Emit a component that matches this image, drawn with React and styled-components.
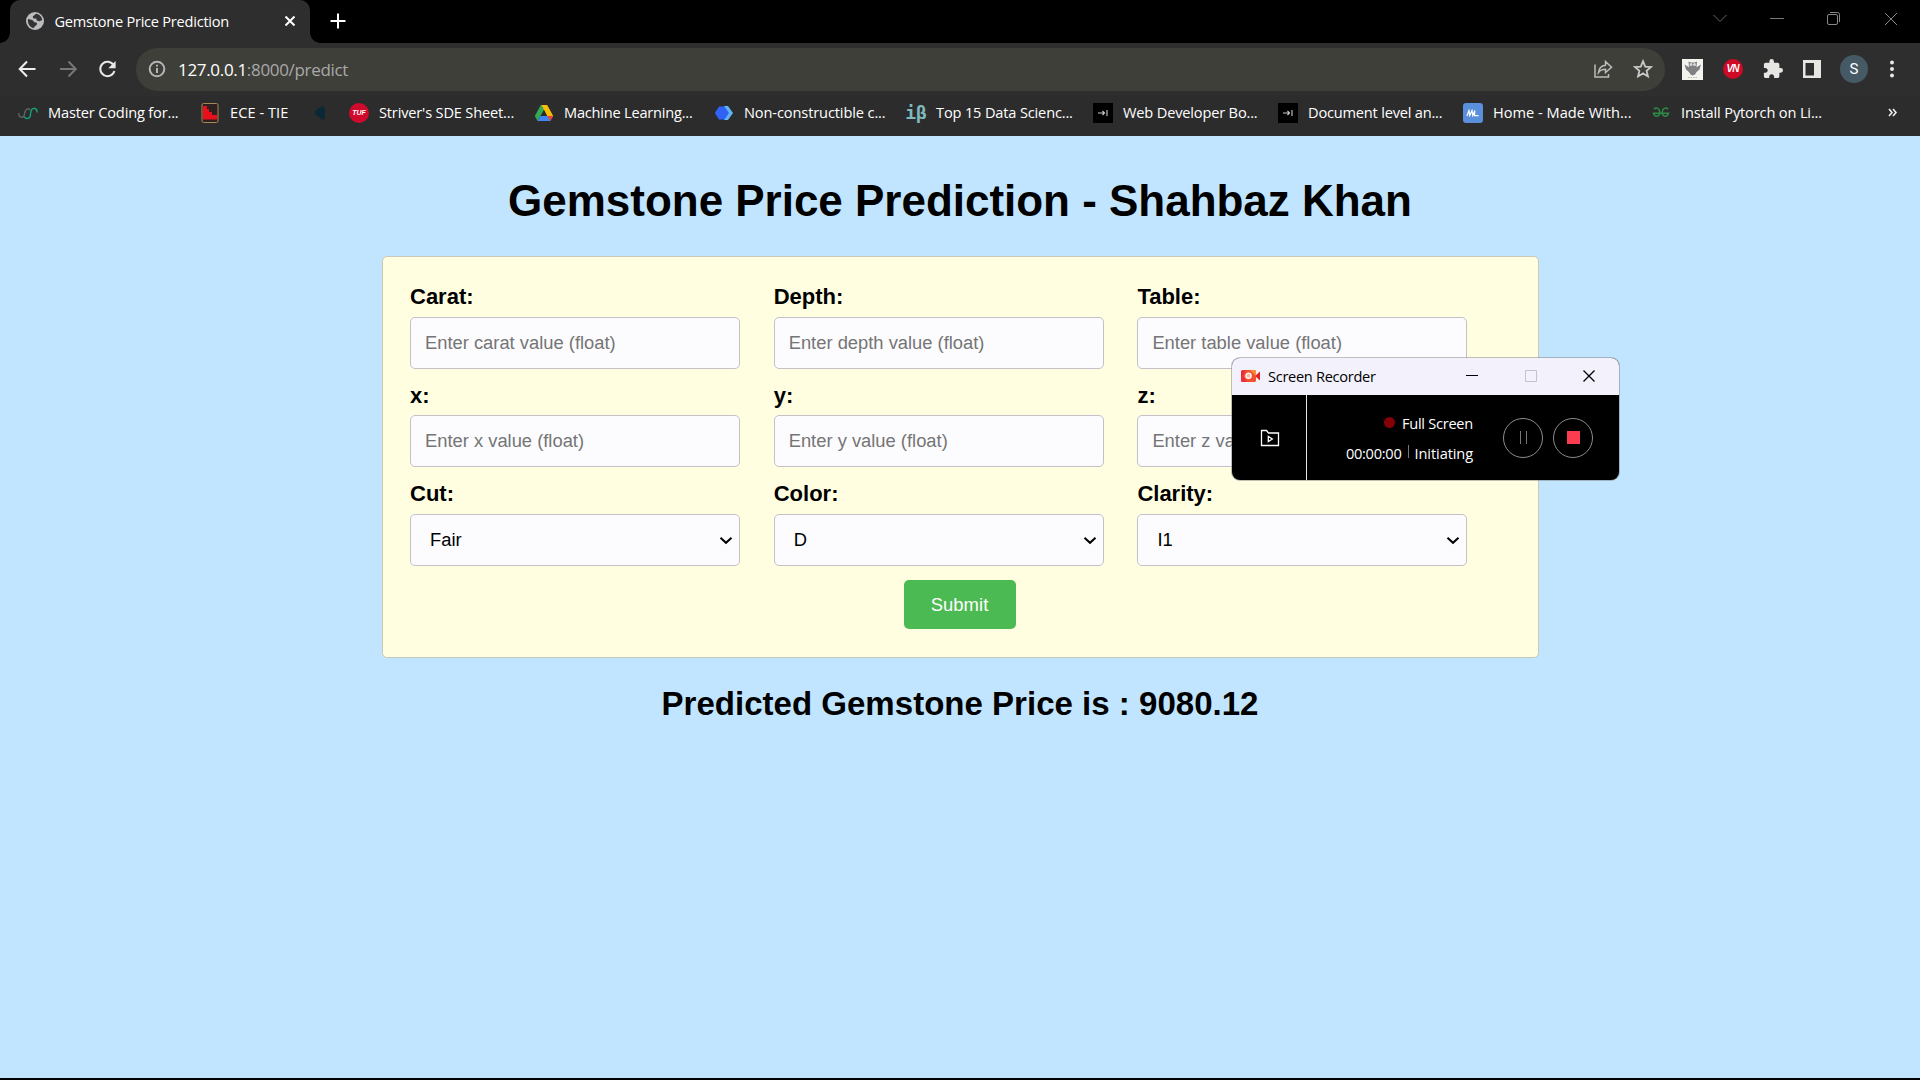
import React from "react";
import styled, { createGlobalStyle } from "styled-components";

const GlobalStyle = createGlobalStyle`
  * { box-sizing: border-box; }
  body { margin: 0; background: #000; overflow: hidden; }
`;

const uiFont = `"Open Sans", "Noto Sans", sans-serif`;
const pageFont = `"Liberation Sans", Arial, sans-serif`;

const Screen = styled.div`
  width: 1920px;
  height: 1080px;
  display: flex;
  flex-direction: column;
  position: relative;
  background: #000;
`;

const TabStrip = styled.header`
  height: 43px;
  flex: none;
  display: flex;
  background: #000;
  padding-left: 10px;
`;

const Tab = styled.div`
  width: 300px;
  height: 43px;
  background: #2e2e2e;
  border-radius: 10px 10px 0 0;
  display: flex;
  align-items: center;
  padding: 0 14px 1px 15px;
  position: relative;
  &::before, &::after {
    content: "";
    position: absolute;
    bottom: 0;
    width: 10px;
    height: 10px;
  }
  &::before {
    left: -10px;
    background: radial-gradient(circle at 0 0, transparent 9.5px, #2e2e2e 10px);
  }
  &::after {
    right: -10px;
    background: radial-gradient(circle at 100% 0, transparent 9.5px, #2e2e2e 10px);
  }
`;

const TabTitle = styled.span`
  flex: 1;
  margin-left: 9.5px;
  font: 14.6px/20px ${uiFont};
  letter-spacing: ${(p) => p.$spacing || 0}px;
  color: #fff;
  white-space: nowrap;
`;

const NewTab = styled.div`
  width: 55px;
  display: flex;
  align-items: center;
  justify-content: center;
  padding-bottom: 1px;
`;

const WindowControls = styled.div`
  margin-left: auto;
  padding-right: 1px;
  display: flex;
  height: 37px;
  align-items: center;
`;

const WindowButton = styled.div`
  width: 57px;
  display: flex;
  justify-content: center;
`;

const Toolbar = styled.div`
  height: 53px;
  flex: none;
  background: #2e2e2e;
  display: flex;
  align-items: center;
  padding: 0 25px 1px 16px;
`;

const NavButtons = styled.div`
  display: flex;
  width: 120px;
  gap: 19px;
`;

const Omnibox = styled.div`
  width: 1529px;
  height: 43px;
  border-radius: 22px;
  background: #3f3f39;
  display: flex;
  align-items: center;
  padding: 0 12px;
`;

const Url = styled.div`
  flex: 1;
  margin-left: 12px;
  padding-top: 1px;
  font: 17px/24px ${uiFont};
  letter-spacing: ${(p) => p.$spacing || 0}px;
  color: #a9a9a9;
  b { font-weight: 400; color: #fff; }
`;

const OmniActions = styled.div`
  display: flex;
  gap: 20px;
`;

const Extensions = styled.div`
  flex: 1;
  display: flex;
  align-items: center;
  justify-content: space-between;
  padding-left: 17px;
`;

const VnBadge = styled.div`
  width: 20px;
  height: 20px;
  border-radius: 50%;
  background: #cf0a26;
  display: flex;
  align-items: center;
  justify-content: center;
`;

const Avatar = styled.div`
  width: 28px;
  height: 28px;
  margin: 0 1px 0 -1px;
  border-radius: 50%;
  background: #455a64;
  color: #fff;
  font: 15px/28px Roboto, sans-serif;
  text-align: center;
`;

const BookmarkBar = styled.nav`
  height: 40px;
  flex: none;
  background: #2c2c2c;
  display: flex;
  align-items: center;
  padding-left: 18px;
  padding-bottom: 7px;
`;

const Bookmark = styled.div`
  width: ${(p) => p.$width}px;
  display: flex;
  align-items: center;
  gap: 10px;
  white-space: nowrap;
  font: 14.6px/20px ${uiFont};
  color: #fff;
`;

const BookmarkLabel = styled.span`
  letter-spacing: ${(p) => p.$spacing}px;
  margin: -1px 0 1px;
`;

const Favicon = styled.span`
  width: 20px;
  height: 20px;
  flex: none;
  display: flex;
  align-items: center;
  justify-content: center;
`;

const Tile = styled(Favicon)`
  background: ${(p) => p.$bg};
  border-radius: ${(p) => p.$radius || 0};
  color: ${(p) => p.$color || "#fff"};
  font: ${(p) => p.$font || `700 7px/20px ${pageFont}`};
`;

const Overflow = styled.div`
  margin-left: 59px;
  display: flex;
`;

const Page = styled.main`
  height: 942px;
  flex: none;
  background: #c1e5ff;
  font-family: ${pageFont};
  color: #000;
  display: flex;
  flex-direction: column;
  align-items: center;
`;

const Title = styled.h1`
  margin: 39px 0 0;
  height: 81px;
  font-size: 44px;
  line-height: 52px;
  letter-spacing: -0.02px;
  white-space: nowrap;
`;

const Card = styled.form`
  width: 1157px;
  height: 402px;
  margin-left: 1px;
  background: #fffee0;
  border: 1px solid #c9c9bb;
  border-radius: 5px;
  padding: 27px;
  display: flex;
  flex-direction: column;
  align-items: center;
`;

const Fields = styled.div`
  align-self: stretch;
  display: grid;
  grid-template-columns: repeat(3, 330px);
  column-gap: 33.7px;
  grid-template-rows: 99px 98px 98.5px;
`;

const Field = styled.label`
  display: flex;
  flex-direction: column;
`;

const FieldName = styled.span`
  height: ${(p) => p.$height || 33}px;
  font-weight: 700;
  font-size: 22px;
  line-height: 25px;
`;

const Input = styled.input`
  width: 330px;
  height: 52px;
  border: 1px solid #c3c0ca;
  border-radius: 5px;
  background: #fcfcff;
  padding: 0 14px;
  font: 18.35px ${pageFont};
  color: #000;
  &::placeholder { color: #757575; opacity: 1; }
`;

const SelectBox = styled.div`
  width: 330px;
  height: 52px;
  border: 1px solid #c3c0ca;
  border-radius: 5px;
  background: #fcfcff;
  padding: 0 6px 0 19px;
  display: flex;
  align-items: center;
  justify-content: space-between;
  font: 18.35px ${pageFont};
`;

const Submit = styled.button`
  width: 112px;
  height: 49px;
  margin-right: 2px;
  border: 0;
  border-radius: 5px;
  background: #4cba52;
  color: #fff;
  font: 18.5px ${pageFont};
  padding: 1px 0 0;
`;

const Result = styled.h2`
  margin: 26px 0 0;
  font-size: 33.05px;
  line-height: 40px;
  white-space: nowrap;
`;

const Recorder = styled.section`
  position: absolute;
  left: 1232px;
  top: 358px;
  width: 387px;
  height: 122px;
  border-radius: 8px;
  overflow: hidden;
  background: #000;
  box-shadow: 0 0 0 1px rgba(130, 130, 130, 0.5);
  font-family: ${uiFont};
`;

const RecorderTitle = styled.div`
  height: 37px;
  background: #f3f2fc;
  display: flex;
  align-items: center;
  padding: 0 24px 1px 9px;
  font-size: 14.6px;
  color: #000;
  span { flex: 1; margin-left: 7px; letter-spacing: -0.3px; white-space: nowrap; }
`;

const RecorderButtons = styled.div`
  display: flex;
  gap: 46.5px;
`;

const RecorderBody = styled.div`
  height: 85px;
  display: flex;
  align-items: center;
`;

const FolderPane = styled.div`
  width: 75px;
  height: 85px;
  border-right: 1px solid #e4e4e4;
  display: flex;
  align-items: center;
  justify-content: center;
  padding-left: 2px;
`;

const Status = styled.div`
  width: 166px;
  display: flex;
  flex-direction: column;
  align-items: flex-end;
  gap: 10px;
  color: #fff;
  font-size: 14.6px;
  line-height: 20px;
  letter-spacing: -0.26px;
`;

const StatusLine = styled.div`
  display: flex;
  align-items: center;
  white-space: nowrap;
`;

const Initiating = styled.span`
  letter-spacing: -0.1px;
`;

const Dot = styled.i`
  width: 11px;
  height: 11px;
  border-radius: 50%;
  background: #850008;
  margin-right: 7px;
`;

const Divider = styled.i`
  width: 1px;
  height: 13px;
  background: #777;
  margin: 0 6px 2px 6px;
`;

const RoundButton = styled.div`
  width: 40px;
  height: 40px;
  border: 1px solid #8d8d8d;
  border-radius: 50%;
  margin-left: ${(p) => p.$left}px;
  display: flex;
  align-items: center;
  justify-content: center;
`;

const StopMark = styled.i`
  width: 13px;
  height: 13px;
  background: #fa3c50;
`;

const PauseMark = styled.i`
  width: 7px;
  height: 13px;
  border: solid #777;
  border-width: 0 1px;
`;

const Line = ({ w, h, d, color = "#fff", sw = 2, box }) => (
  <svg width={w} height={h} viewBox={box || `0 0 ${w} ${h}`} fill="none" stroke={color} strokeWidth={sw}>
    <path d={d} />
  </svg>
);

const Globe = () => (
  <svg width="20" height="20" viewBox="0 0 20 20">
    <circle cx="10" cy="10" r="9" fill="#bcbcc0" />
    <path d="M3 8l4.400 1 2 2.200 2.600.600-.300 2.200-2.200 1.500-.400 1.500C5 16.700 2.400 13 3 8zM11 2.800l-3.200 2.600.4 2.200 3-.2.6 2.200 2.800.600 2.600-1.200C17 6 14.500 3.200 11 2.800z" fill="#333" />
  </svg>
);

const Reload = () => (
  <svg width="19" height="20" viewBox="0 0 19 20">
    <path d="M15.600 6.200A7.200 7.200 0 1 0 16.400 12" fill="none" stroke="#e8e8e8" strokeWidth="2" />
    <path d="M17.600 2v7.300h-7.300z" fill="#e8e8e8" />
  </svg>
);

const Info = () => (
  <svg width="18" height="18" viewBox="0 0 18 18" fill="none" stroke="#b5b5b8" strokeWidth="2">
    <circle cx="9" cy="9" r="7.300" />
    <path d="M9 8v5M9 4.800v1.800" />
  </svg>
);

const Share = () => (
  <svg width="20" height="20" viewBox="0 0 20 20" fill="none" stroke="#bcbcbc" strokeWidth="1.500">
    <path d="M2 5.500v12.500h13.500v-3M12.500 2.500l6 5.700-6 5.300v-3.200c-3 0-5.300.8-7 3.200.4-4.200 3-6.800 7-7.300z" />
  </svg>
);

const Star = () => (
  <svg width="20" height="20" viewBox="0 0 20 20" fill="none" stroke="#c8c8c8" strokeWidth="1.800">
    <path d="M10 2.200l2.200 5.400 5.800.45-4.400 3.750 1.350 5.650L10 14.400l-4.950 3.050 1.350-5.650L2 8.050l5.800-.45z" />
  </svg>
);

const Owl = () => (
  <svg width="21" height="21" viewBox="0 0 21 21">
    <rect width="21" height="21" fill="#f4f4ee" />
    <path d="M2.500 5.500L7 8.200 6.500 2.500l2.500 1h3.500l2.500-1-.5 5.700 4.500-2.700-1.500 5-3 2.500-1.500 2.500-2.500 1-2-1L7 13l-3-2.500z" fill="#808084" />
    <path d="M7.500 5.500a1.500 1.500 0 1 0 3 0 1.500 1.500 0 1 0-3 0M11 5.500a1.500 1.500 0 1 0 3 0 1.500 1.500 0 1 0-3 0" fill="#d8d8d8" />
    <path d="M6 18.500h9" stroke="#bbb" strokeDasharray="1.500 1" />
  </svg>
);

const VnMark = styled.span`
  font: italic 700 10px/20px ${pageFont};
  color: #fff;
  letter-spacing: -1px;
  padding-right: 1px;
`;

const Puzzle = () => (
  <svg width="20" height="20" viewBox="1 1 22 22" fill="#e6e6e2">
    <path d="M20.500 11H19V7c0-1.100-.9-2-2-2h-4V3.500a2.500 2.500 0 0 0-5 0V5H4c-1.100 0-1.990.9-1.990 2v3.800H3.500c1.490 0 2.700 1.210 2.700 2.700s-1.210 2.700-2.700 2.700H2V20c0 1.100.9 2 2 2h3.800v-1.500c0-1.490 1.210-2.700 2.700-2.700s2.700 1.210 2.700 2.700V22H17c1.100 0 2-.9 2-2v-4h1.500a2.500 2.500 0 0 0 0-5z" />
  </svg>
);

const SidePanel = () => (
  <svg width="18" height="18" viewBox="0 0 18 18">
    <path d="M0 0h18v18H0zM2.500 3v12.500H11V3z" fill="#e6e6e2" fillRule="evenodd" />
  </svg>
);

const Menu = () => (
  <svg width="6" height="20" viewBox="0 0 6 20" fill="#e6e6e6">
    <circle cx="3" cy="3.500" r="2" />
    <circle cx="3" cy="10" r="2" />
    <circle cx="3" cy="16.500" r="2" />
  </svg>
);

const Chevron = () => <Line w={14} h={9} d="M1.500 1.800L7 6.800l5.500-5" color="#000" />;

const Loops = () => (
  <svg width="20" height="14" viewBox="0 0 20 14" fill="none" strokeWidth="1.400">
    <path d="M.8 7c0 5.500 5.200 5.500 5.700 1S10 1 12 4" stroke="#5c6660" />
    <path d="M6 10.500c1.500 3 6.500 2.500 6.500-2 0-5 2-6.500 4.200-6 1.800.5 2.500 2 2.500 4" stroke="#14a27c" />
  </svg>
);

const Bars = () => (
  <svg width="18" height="20" viewBox="0 0 18 20">
    <rect x="1" y=".5" width="16" height="19" rx="1.500" fill="#302020" stroke="#a58a55" />
    <path d="M2 3h4v3h2v3h3v3h5v4.500H2z" fill="#e8101c" />
  </svg>
);

const Leaf = () => (
  <svg width="16" height="18" viewBox="0 0 16 18">
    <path d="M3 7l4-3 4-2 2 3v9l-3 2-3-3-4-2z" fill="#0b2836" />
  </svg>
);

const Drive = () => (
  <svg width="20" height="18" viewBox="0 0 20 18">
    <path d="M6.800 1h6L6.500 12l-3 5L.8 12z" fill="#34a853" />
    <path d="M7.500 1h5.700l6 11h-6z" fill="#fbbc04" />
    <path d="M6.500 12h12.700l-3 5H3.500z" fill="#4285f4" />
    <path d="M13.500 12h5.700l-3 5z" fill="#ea4335" />
    <path d="M10 6.500l3 5.500H7z" fill="#2c2c2c" />
  </svg>
);

const Diamonds = () => (
  <svg width="20" height="16" viewBox="0 0 20 16">
    <path d="M10 1h4l5 7-5 7h-4z" fill="#62b5f5" />
    <path d="M5 1.500h5.500L15 8l-4.500 6.500H5L.8 8z" fill="#2f62f5" />
  </svg>
);

const ArrowBar = () => <Line w={12} h={8} d="M1 4h6M5.500 2L7.500 4l-2 2M10 1v6" color="#ccc" sw={1.100} />;

const Waves = () => <Line w={14} h={8} d="M1 7l2-5.500.8 5 2.200-5 .8 5 2-5-.3 5.200h4" color="#fff" sw={1.200} />;

const Geeks = () => (
  <svg width="18" height="12" viewBox="0 0 18 12" fill="none" stroke="#2d8a46" strokeWidth="1.500">
    <path d="M2 2.200C4-.2 7.800 1.500 7.800 5.500S3 11 1.500 6.300h15C15 11 10.200 9.500 10.200 5.500S14-.2 16 2.200" />
  </svg>
);

const RecorderLogo = () => (
  <svg width="20" height="14" viewBox="0 0 20 14">
    <path d="M14 7l5-4.500v9z" fill="#e02424" />
    <rect x="0" y="1" width="15" height="12" rx="1.500" fill="#f4512f" />
    <path d="M0 2l5-1-3 6 4 6H1.500Q0 13 0 11z" fill="#f02a3e" />
    <path d="M9 1h4.500Q15 1 15 2.500V7z" fill="#fb8c35" />
    <circle cx="7.500" cy="6.800" r="2.600" fill="#fbb5a5" stroke="#fff" strokeWidth="1.300" />
  </svg>
);

const FolderPlay = () => (
  <svg width="20" height="18" viewBox="0 0 20 18" fill="none" stroke="#fff" strokeWidth="1.300">
    <path d="M1.500 16.500v-15h5l2 2.500h10v12.500z" />
    <path d="M8.300 7.500v5l4-2.500z" />
  </svg>
);

const bookmarks = [
  { w: 182, label: "Master Coding for...", s: -0.16, icon: <Favicon><Loops /></Favicon> },
  { w: 110, label: "ECE - TIE", s: 0.05, icon: <Favicon><Bars /></Favicon> },
  { w: 39, label: "", s: 0, icon: <Favicon><Leaf /></Favicon> },
  { w: 185, label: "Striver's SDE Sheet...", s: -0.17, icon: <Tile $bg="#cf0a2c" $radius="50%" $font={`italic 700 7px/20px ${pageFont}`}>TUF</Tile> },
  { w: 180, label: "Machine Learning...", s: -0.22, icon: <Favicon><Drive /></Favicon> },
  { w: 192, label: "Non-constructible c...", s: -0.12, icon: <Favicon><Diamonds /></Favicon> },
  { w: 187, label: "Top 15 Data Scienc...", s: -0.16, icon: <Tile $bg="none" $color="#7fb9bd" $font={`700 18px/20px "DejaVu Sans Mono", monospace`}>iβ</Tile> },
  { w: 185, label: "Web Developer Bo...", s: -0.17, icon: <Tile $bg="#000"><ArrowBar /></Tile> },
  { w: 185, label: "Document level an...", s: -0.2, icon: <Tile $bg="#000"><ArrowBar /></Tile> },
  { w: 188, label: "Home - Made With...", s: 0, icon: <Tile $bg="#5a8fdc" $radius="3px"><Waves /></Tile> },
  { w: 178, label: "Install Pytorch on Li...", s: -0.15, icon: <Favicon><Geeks /></Favicon> },
];

const inputs = [
  ["Carat:", "Enter carat value (float)"],
  ["Depth:", "Enter depth value (float)"],
  ["Table:", "Enter table value (float)"],
  ["x:", "Enter x value (float)"],
  ["y:", "Enter y value (float)"],
  ["z:", "Enter z value (float)"],
];

const selects = [["Cut:", "Fair"], ["Color:", "D"], ["Clarity:", "I1"]];

export default function App() {
  return (
    <Screen>
      <GlobalStyle />
      <TabStrip>
        <Tab>
          <Globe />
          <TabTitle $spacing={-0.25}>Gemstone Price Prediction</TabTitle>
          <Line w={12} h={12} d="M1.500 1.500l9 9M10.500 1.500l-9 9" />
        </Tab>
        <NewTab><Line w={16} h={16} d="M8 .5v15M.5 8h15" /></NewTab>
        <WindowControls>
          <WindowButton><Line w={14} h={9} d="M.5 1L7 7.500 13.500 1" color="#666" sw={1} /></WindowButton>
          <WindowButton><Line w={14} h={2} d="M0 .5h14" color="#777" sw={1} /></WindowButton>
          <WindowButton>
            <Line w={15} h={15} d="M3 3.500h7a1.500 1.500 0 0 1 1.500 1.500v7a1.500 1.500 0 0 1-1.500 1.500H3A1.500 1.500 0 0 1 1.500 12V5A1.500 1.500 0 0 1 3 3.500zM4 1.500h7.500a2 2 0 0 1 2 2V11" color="#888" sw={1} />
          </WindowButton>
          <WindowButton><Line w={14} h={14} d="M1 1l12 12M13 1L1 13" color="#888" sw={1} /></WindowButton>
        </WindowControls>
      </TabStrip>

      <Toolbar>
        <NavButtons>
          <Line w={22} h={20} d="M19.500 10H4M11 2.500L3.700 10l7.300 7.500" color="#eee" />
          <Line w={22} h={20} d="M3 10h15.500M11.500 2.500L18.800 10l-7.300 7.500" color="#777" />
          <Reload />
        </NavButtons>
        <Omnibox>
          <Info />
          <Url $spacing={-0.32}><b>127.0.0.1</b>:8000/predict</Url>
          <OmniActions><Share /><Star /></OmniActions>
        </Omnibox>
        <Extensions>
          <Owl />
          <VnBadge><VnMark>VN</VnMark></VnBadge>
          <Puzzle />
          <SidePanel />
          <Avatar>S</Avatar>
          <Menu />
        </Extensions>
      </Toolbar>

      <BookmarkBar>
        {bookmarks.map((b) => (
          <Bookmark key={b.label} $width={b.w}>
            {b.icon}
            {b.label && <BookmarkLabel $spacing={b.s}>{b.label}</BookmarkLabel>}
          </Bookmark>
        ))}
        <Overflow><Line w={10} h={10} d="M1 1l3 3.500L1 8M5 1l3 3.500L5 8" color="#eee" sw={1.600} /></Overflow>
      </BookmarkBar>

      <Page>
        <Title>Gemstone Price Prediction - Shahbaz Khan</Title>
        <Card>
          <Fields>
            {inputs.map(([name, hint], i) => (
              <Field key={name}>
                <FieldName $height={i > 2 ? 32 : 33}>{name}</FieldName>
                <Input placeholder={hint} />
              </Field>
            ))}
            {selects.map(([name, value]) => (
              <Field key={name}>
                <FieldName>{name}</FieldName>
                <SelectBox>{value}<Chevron /></SelectBox>
              </Field>
            ))}
          </Fields>
          <Submit type="button">Submit</Submit>
        </Card>
        <Result>Predicted Gemstone Price is : 9080.12</Result>
      </Page>

      <Recorder>
        <RecorderTitle>
          <RecorderLogo />
          <span>Screen Recorder</span>
          <RecorderButtons>
            <Line w={12} h={12} d="M0 5.500h12" color="#000" sw={1} />
            <Line w={12} h={12} d="M.5.5h11v11H.5z" color="#c4c4c8" sw={1} />
            <Line w={12} h={12} d="M.5.5l11 11M11.500.5l-11 11" color="#000" sw={1.300} />
          </RecorderButtons>
        </RecorderTitle>
        <RecorderBody>
          <FolderPane><FolderPlay /></FolderPane>
          <Status>
            <StatusLine><Dot />Full Screen</StatusLine>
            <StatusLine>00:00:00<Divider /><Initiating>Initiating</Initiating></StatusLine>
          </Status>
          <RoundButton $left={30}><PauseMark /></RoundButton>
          <RoundButton $left={10}><StopMark /></RoundButton>
        </RecorderBody>
      </Recorder>
    </Screen>
  );
}
